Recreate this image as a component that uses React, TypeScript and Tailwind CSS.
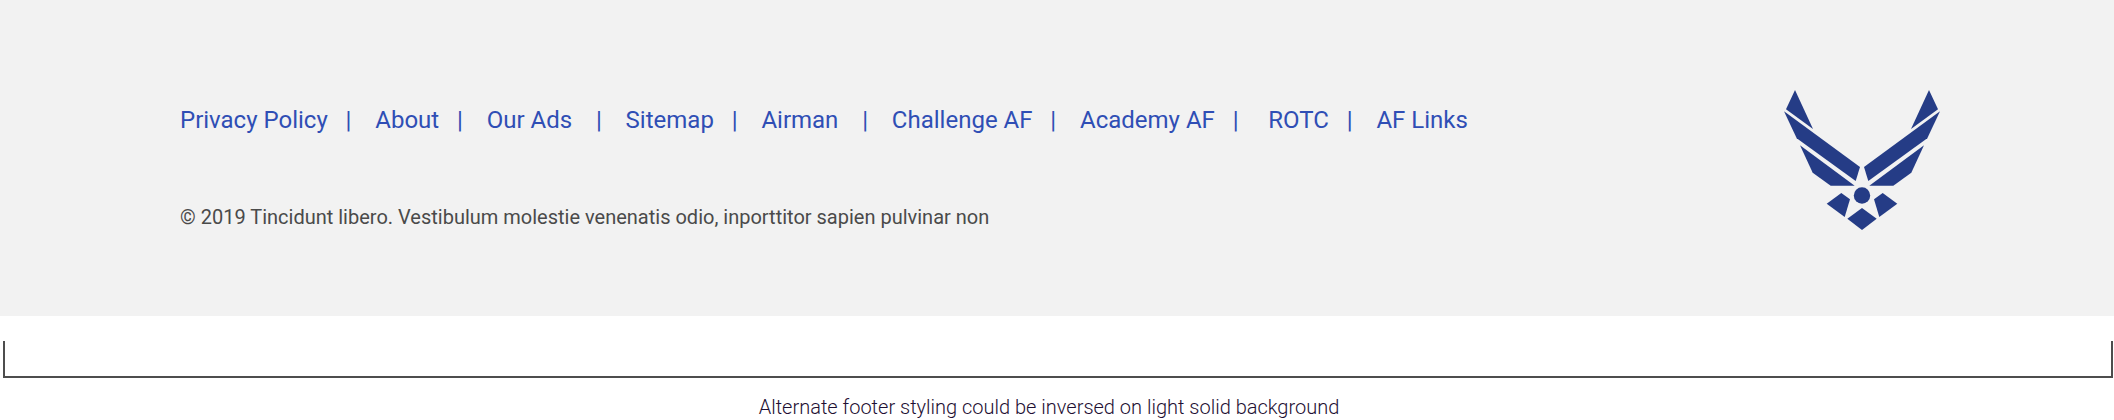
import React from "react";

type FooterLink = { label: string; separator?: string };

const links: FooterLink[] = [
  { label: "Privacy Policy", separator: "   |    " },
  { label: "About", separator: "   |    " },
  { label: "Our Ads", separator: "    |    " },
  { label: "Sitemap", separator: "   |    " },
  { label: "Airman", separator: "    |    " },
  { label: "Challenge AF", separator: "   |    " },
  { label: "Academy AF", separator: "   |     " },
  { label: "ROTC", separator: "   |    " },
  { label: "AF Links" },
];

function WingHalf() {
  return (
    <>
      <path d="M33 0L51 39L24 19.3Z" />
      <path d="M22 21.3L98 77L93.7 91L34.7 48.3Z" />
      <path d="M38 55.3L92.7 95.7H68.7L50.7 82.7Z" />
      <path d="M79.3 103L88 109.3L82.7 127L64.7 113.7Z" />
    </>
  );
}

function Emblem() {
  return (
    <svg
      viewBox="22 0 156 140"
      className="h-[140px] w-[156px] shrink-0 fill-[#253c86]"
      role="img"
      aria-label="Air Force"
    >
      <WingHalf />
      <g transform="matrix(-1 0 0 1 200 0)">
        <WingHalf />
      </g>
      <circle cx="100" cy="105.5" r="8.2" />
      <path d="M100 118L114.7 128.8L100 140L85.3 128.8Z" />
    </svg>
  );
}

export default function App() {
  return (
    <main className="bg-white font-['Roboto',sans-serif]">
      <footer className="flex items-start justify-between bg-[#f2f2f2] pt-[90px] pr-[174px] pb-[86px] pl-[180px]">
        <div className="flex flex-col gap-[71px] pt-4">
          <nav className="text-2xl leading-7 whitespace-pre-wrap text-[#2f4eb5]">
            {links.map(({ label, separator }) => (
              <React.Fragment key={label}>
                <a href="#">{label}</a>
                {separator}
              </React.Fragment>
            ))}
          </nav>
          <p className="text-xl leading-6 text-[#4a4a4a]">
            © 2019 Tincidunt libero. Vestibulum molestie venenatis odio, inporttitor sapien pulvinar non
          </p>
        </div>
        <Emblem />
      </footer>
      <div className="pt-[25px] pr-px pl-[3px]">
        <div className="h-[37px] border-x-2 border-b-2 border-[#4d4d4d]" />
      </div>
      <p className="pt-[17px] pr-4 text-center text-xl leading-6 font-light text-[#1e0f33]">
        Alternate footer styling could be inversed on light solid background
      </p>
    </main>
  );
}
